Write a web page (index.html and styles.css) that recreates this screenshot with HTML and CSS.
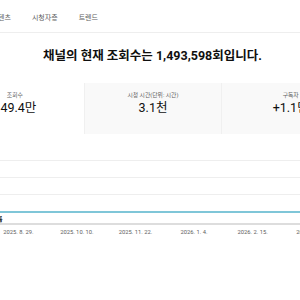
FILE: index.html
```html
<!DOCTYPE html>
<html lang="ko">
<head>
<meta charset="utf-8">
<link rel="stylesheet" href="styles.css">
</head>
<body>
<nav class="tabs">
  <span class="tab tab-first">텐츠</span>
  <span class="tab">시청자층</span>
  <span class="tab">트렌드</span>
</nav>
<main class="main">
  <h1 class="headline">채널의 현재 조회수는 1,493,598회입니다.</h1>
  <div class="cards">
    <div class="card card-selected">
      <div class="card-label">조회수</div>
      <div class="card-value">149.4만</div>
    </div>
    <div class="card">
      <div class="card-label">시청 시간(단위: 시간)</div>
      <div class="card-value">3.1천</div>
    </div>
    <div class="card">
      <div class="card-label">구독자</div>
      <div class="card-value">+1.1만</div>
    </div>
  </div>
</main>
<section class="chart">
  <div class="grid-line"></div>
  <div class="grid-line"></div>
  <div class="grid-line"></div>
  <div class="data-line"></div>
  <div class="zero-row"><span class="zero-label">룹</span></div>
  <div class="axis"></div>
  <div class="dates">
    <span class="date">2025. 8. 29.</span>
    <span class="date">2025. 10. 10.</span>
    <span class="date">2025. 11. 22.</span>
    <span class="date">2026. 1. 4.</span>
    <span class="date">2026. 2. 15.</span>
    <span class="date">2026. 3. 29.</span>
  </div>
</section>
</body>
</html>
```
FILE: styles.css
```css
html, body {
  margin: 0;
  padding: 0;
  background: #ffffff;
  overflow: hidden;
}
body {
  width: 300px;
  height: 300px;
  font-family: Roboto, "Noto Sans CJK KR", sans-serif;
  color: #0f0f0f;
}
.tabs {
  display: flex;
  gap: 21px;
  height: 33px;
  align-items: center;
  padding-top: 4px;
  box-sizing: border-box;
  border-bottom: 1px solid #eeeeee;
  margin-left: -2px;
}
.tab {
  font-size: 7px;
  color: #606060;
  line-height: 8px;
}
.main {
  margin-left: -54px;
  width: 413px;
}
.headline {
  margin: 15px 0 0 0;
  font-size: 12.5px;
  line-height: 16px;
  font-weight: 700;
  text-align: center;
  color: #0f0f0f;
}
.cards {
  margin-top: 19px;
  display: grid;
  grid-template-columns: 1fr 1fr 1fr;
  height: 51px;
}
.card {
  background: #f9f9f9;
  text-align: center;
  padding-top: 9px;
  box-sizing: border-box;
}
.card + .card {
  border-left: 1px solid #f0f0f0;
}
.card-selected {
  background: #ffffff;
}
.card-label {
  font-size: 5.8px;
  line-height: 7px;
  color: #606060;
}
.card-value {
  margin-top: 2px;
  font-size: 12.5px;
  line-height: 14px;
  color: #0f0f0f;
}
.chart {
  margin-top: 26px;
}
.grid-line {
  height: 1px;
  background: #eeeeee;
  margin-bottom: 16px;
}
.data-line {
  height: 2px;
  background: #7fc6d8;
}
.zero-row {
  height: 10px;
  display: flex;
  align-items: center;
}
.zero-label {
  font-size: 6px;
  font-weight: 700;
  color: #0f0f0f;
  margin-left: -3px;
  line-height: 7px;
}
.axis {
  height: 2px;
  background: #dddddd;
}
.dates {
  display: grid;
  grid-template-columns: repeat(6, 58.6px);
  margin-left: -11px;
  margin-top: 4px;
}
.date {
  font-size: 5.8px;
  line-height: 7px;
  color: #606060;
  text-align: center;
  white-space: nowrap;
}
```
